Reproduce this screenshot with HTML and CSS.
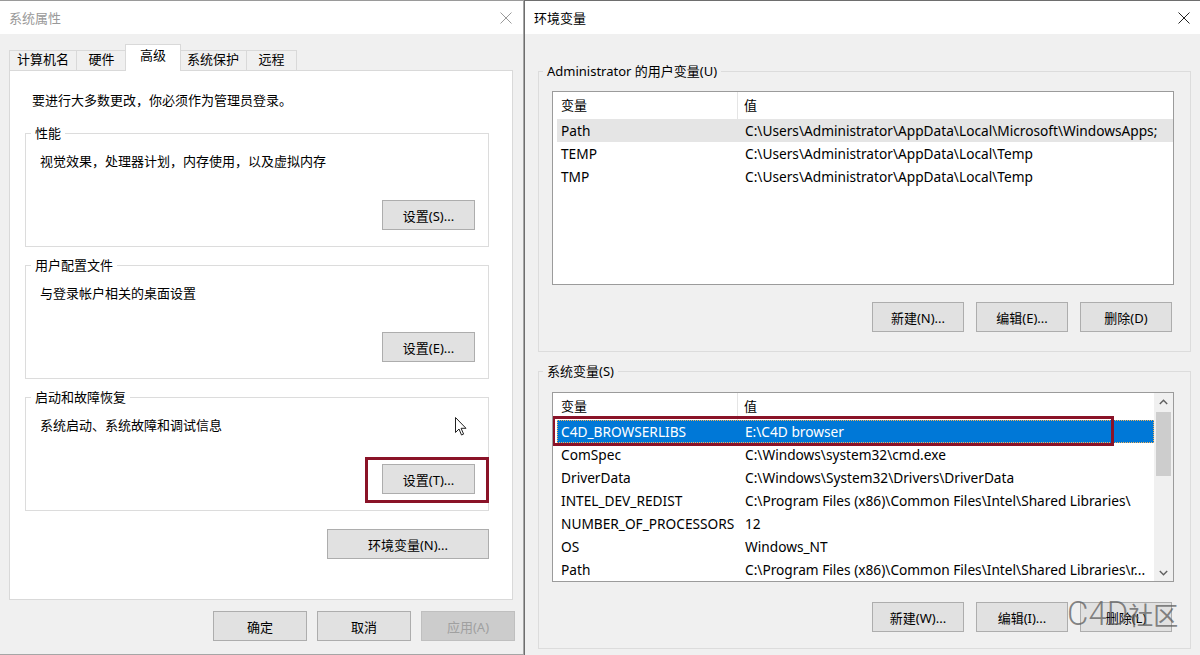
FILE: index.html
```html
<!DOCTYPE html>
<html lang="zh-CN">
<head>
    <meta charset="UTF-8">
    <title>系统属性 / 环境变量</title>
    <link rel="stylesheet" href="styles.css">
</head>
<body>
<div class="desktop">

    <!-- 系统属性 (inactive window) -->
    <section class="win win-sys">
        <header class="titlebar inactive">
            <span class="title">系统属性</span>
            <svg class="close" width="12" height="12" viewBox="0 0 12 12"><path d="M0.5 0.5 L11.5 11.5 M11.5 0.5 L0.5 11.5" stroke="#9a9a9a" stroke-width="1"/></svg>
        </header>
        <div class="win-body">
            <div class="tabs">
                <div class="tab">计算机名</div>
                <div class="tab">硬件</div>
                <div class="tab active">高级</div>
                <div class="tab">系统保护</div>
                <div class="tab">远程</div>
            </div>
            <div class="tab-panel">
                <p class="intro">要进行大多数更改，你必须作为管理员登录。</p>

                <fieldset class="grp">
                    <legend>性能</legend>
                    <p>视觉效果，处理器计划，内存使用，以及虚拟内存</p>
                    <div class="grp-actions"><button class="btn btn-set">设置(S)...</button></div>
                </fieldset>

                <fieldset class="grp">
                    <legend>用户配置文件</legend>
                    <p>与登录帐户相关的桌面设置</p>
                    <div class="grp-actions"><button class="btn btn-set">设置(E)...</button></div>
                </fieldset>

                <fieldset class="grp">
                    <legend>启动和故障恢复</legend>
                    <p>系统启动、系统故障和调试信息</p>
                    <div class="grp-actions">
                        <span class="hl-wrap"><button class="btn btn-set">设置(T)...</button></span>
                    </div>
                </fieldset>

                <div class="panel-actions"><button class="btn btn-env">环境变量(N)...</button></div>

                <!-- mouse pointer -->
                <svg class="cursor" width="14" height="21" viewBox="0 0 14 21"><path d="M1.5 1.5 L1.5 16.5 L5 13 L7.5 19 L9.6 18.1 L7.1 12.3 L12 12.3 Z" fill="#fff" stroke="#222" stroke-width="1" stroke-linejoin="round"/></svg>
            </div>
            <div class="dlg-actions">
                <button class="btn btn-dlg">确定</button>
                <button class="btn btn-dlg">取消</button>
                <button class="btn btn-dlg" disabled>应用(A)</button>
            </div>
        </div>
    </section>

    <!-- 环境变量 (active window) -->
    <section class="win win-env">
        <header class="titlebar">
            <span class="title">环境变量</span>
            <svg class="close" width="12" height="12" viewBox="0 0 12 12"><path d="M0.5 0.5 L11.5 11.5 M11.5 0.5 L0.5 11.5" stroke="#222" stroke-width="1"/></svg>
        </header>
        <div class="win-body env-body">
            <fieldset class="env-grp user-grp">
                <legend>Administrator 的用户变量(U)</legend>
                <div class="list list-user">
                    <div class="list-main">
                        <div class="list-head"><span>变量</span><span>值</span></div>
                        <div class="list-row sel-gray"><span>Path</span><span>C:\Users\Administrator\AppData\Local\Microsoft\WindowsApps;</span></div>
                        <div class="list-row"><span>TEMP</span><span>C:\Users\Administrator\AppData\Local\Temp</span></div>
                        <div class="list-row"><span>TMP</span><span>C:\Users\Administrator\AppData\Local\Temp</span></div>
                    </div>
                </div>
                <div class="env-actions">
                    <button class="btn btn-env-act">新建(N)...</button>
                    <button class="btn btn-env-act">编辑(E)...</button>
                    <button class="btn btn-env-act">删除(D)</button>
                </div>
            </fieldset>

            <fieldset class="env-grp sys-grp">
                <legend>系统变量(S)</legend>
                <div class="list list-sys">
                    <div class="list-main">
                        <div class="list-head"><span>变量</span><span>值</span></div>
                        <div class="list-row sel-blue"><span>C4D_BROWSERLIBS</span><span>E:\C4D browser</span></div>
                        <div class="list-row"><span>ComSpec</span><span>C:\Windows\system32\cmd.exe</span></div>
                        <div class="list-row"><span>DriverData</span><span>C:\Windows\System32\Drivers\DriverData</span></div>
                        <div class="list-row"><span>INTEL_DEV_REDIST</span><span>C:\Program Files (x86)\Common Files\Intel\Shared Libraries\</span></div>
                        <div class="list-row"><span>NUMBER_OF_PROCESSORS</span><span>12</span></div>
                        <div class="list-row"><span>OS</span><span>Windows_NT</span></div>
                        <div class="list-row"><span>Path</span><span>C:\Program Files (x86)\Common Files\Intel\Shared Libraries\r...</span></div>
                    </div>
                    <div class="scrollbar">
                        <div class="sb-arrow"><svg width="9" height="6" viewBox="0 0 9 6"><path d="M0.8 5 L4.5 1.2 L8.2 5" fill="none" stroke="#606060" stroke-width="1.4"/></svg></div>
                        <div class="sb-thumb"></div>
                        <div class="sb-track"></div>
                        <div class="sb-arrow"><svg width="9" height="6" viewBox="0 0 9 6"><path d="M0.8 1 L4.5 4.8 L8.2 1" fill="none" stroke="#606060" stroke-width="1.4"/></svg></div>
                    </div>
                    <div class="row-mark"></div>
                </div>
                <div class="env-actions">
                    <button class="btn btn-env-act">新建(W)...</button>
                    <button class="btn btn-env-act">编辑(I)...</button>
                    <button class="btn btn-env-act">删除(L)</button>
                </div>
            </fieldset>

            <div class="watermark"><span class="wm-latin">C4D</span>社区</div>
        </div>
    </section>

</div>
</body>
</html>
```

FILE: styles.css
```css
* {
    box-sizing: border-box;
}

body {
    margin: 0;
    font-family: "Noto Sans", "Noto Sans CJK SC", sans-serif;
    font-size: 13px;
    line-height: 18px;
    color: #000;
    background: #fff;
}

.desktop {
    display: flex;
    width: 1200px;
    height: 655px;
    overflow: hidden;
}

/* windows */
.win {
    display: flex;
    flex-direction: column;
    height: 655px;
    background: #f0f0f0;
}

.win-sys {
    width: 524px;
    flex: none;
    border-top: 1px solid #9a9a9a;
    border-right: 1px solid #a6a6a6;
    border-bottom: 1px solid #a6a6a6;
}

.win-env {
    flex: 1;
    position: relative;
    border-top: 1px solid #6e6e6e;
    border-left: 1px solid #6e6e6e;
}

.titlebar {
    height: 33px;
    flex: none;
    display: flex;
    align-items: center;
    justify-content: space-between;
    padding: 0 10px 0 9px;
    background: #fff;
}

.titlebar.inactive {
    padding-right: 11px;
}

.titlebar.inactive .title {
    color: #999;
}

.close {
    display: block;
}

.win-body {
    flex: 1;
    background: #f0f0f0;
}

/* tabs */
.tabs {
    display: flex;
    align-items: flex-end;
    height: 36px;
    padding: 10px 0 0 9px;
}

.tab {
    position: relative;
    height: 20px;
    min-width: 51px;
    padding: 0 7px;
    margin-left: -1px;
    border: 1px solid #d9d9d9;
    border-bottom: none;
    background: #f0f0f0;
    text-align: center;
    line-height: 16px;
    white-space: nowrap;
}

.tab:first-child {
    margin-left: 0;
}

.tab.active {
    z-index: 2;
    height: 27px;
    min-width: 56px;
    margin: 0 -2px -1px -2px;
    padding-top: 2px;
    background: #fff;
}

.tab.active + .tab {
    margin-left: 0;
}

.tab-panel {
    position: relative;
    height: 530px;
    margin: 0 10px 0 9px;
    padding: 20px 23px 0 15px;
    border: 1px solid #d9d9d9;
    background: #fff;
}

.intro {
    margin: 0 0 15px 7px;
}

/* group boxes */
.grp {
    margin: 0 0 9px;
    padding: 0 13px 16px 14px;
    border: 1px solid #dcdcdc;
    min-width: 0;
}

.grp legend,
.env-grp legend {
    margin-left: -9px;
    padding: 0 4px;
    line-height: 18px;
}

.grp p {
    margin: 10px 0 0;
}

.grp-actions {
    display: flex;
    justify-content: flex-end;
    margin-top: 30px;
}

.panel-actions {
    display: flex;
    justify-content: flex-end;
    margin-top: 18px;
}

/* buttons */
.btn {
    height: 30px;
    padding: 0;
    border: 1px solid #adadad;
    background: #e1e1e1;
    font-family: inherit;
    font-size: 13px;
    color: #000;
    cursor: default;
}

.btn:disabled {
    background: #cccccc;
    border-color: #bfbfbf;
    color: #a0a0a0;
}

.btn-set {
    width: 93px;
}

.btn-env {
    width: 162px;
}

.btn-dlg {
    width: 94px;
}

.btn-env-act {
    width: 92px;
}

/* red annotation around 设置(T)... */
.hl-wrap {
    position: relative;
    display: inline-flex;
}

.hl-wrap::after {
    content: "";
    position: absolute;
    top: -7px;
    right: -14px;
    bottom: -9px;
    left: -17px;
    border: 3px solid #8a1328;
}

.cursor {
    position: absolute;
    left: 444px;
    top: 345px;
}

.dlg-actions {
    display: flex;
    justify-content: flex-end;
    gap: 10px;
    margin-top: 11px;
    padding-right: 8px;
}

/* 环境变量 */
.env-body {
    padding: 28px 9px 0 13px;
}

.env-grp {
    margin: 0 0 10px;
    padding: 0 16px 19px 13px;
    border: 1px solid #dcdcdc;
    min-width: 0;
}

.env-grp legend {
    margin-left: -9px;
}

.list {
    position: relative;
    display: flex;
    border: 1px solid #9b9b9b;
    background: #fff;
    overflow: hidden;
}

.list-user {
    height: 194px;
    margin-top: 11px;
}

.list-sys {
    height: 190px;
    margin-top: 12px;
}

.list-main {
    flex: 1;
    min-width: 0;
    overflow: hidden;
}

.list-head {
    display: grid;
    grid-template-columns: 185px 1fr;
    height: 27px;
    line-height: 27px;
}

.list-head span {
    padding-left: 8px;
}

.list-head span:first-child {
    border-right: 1px solid #e5e5e5;
}

.list-head span:last-child {
    padding-left: 6px;
}

.list-row {
    display: grid;
    grid-template-columns: 181px 1fr;
    height: 23px;
    margin-left: 4px;
    font-size: 13.7px;
    line-height: 23px;
    white-space: nowrap;
}

.list-row span {
    overflow: hidden;
    padding-left: 4px;
}

.list-row span:last-child {
    padding-left: 7px;
}

.sel-gray {
    background: #e5e5e5;
}

.sel-blue {
    background: #0078d7;
    color: #fff;
    outline: 1px dotted #f3b35a;
    outline-offset: -1px;
}

.scrollbar {
    display: flex;
    flex-direction: column;
    width: 19px;
    flex: none;
    background: #f0f0f0;
}

.sb-arrow {
    height: 17px;
    display: flex;
    align-items: center;
    justify-content: center;
}

.sb-thumb {
    height: 64px;
    margin: 2px 2px 0;
    background: #cdcdcd;
}

.sb-track {
    flex: 1;
}

.row-mark {
    position: absolute;
    left: -1px;
    top: 23px;
    width: 562px;
    height: 30px;
    border: 3px solid #8a1328;
}

.env-actions {
    display: flex;
    justify-content: flex-end;
    gap: 12px;
    padding-right: 2px;
}

.user-grp .env-actions {
    margin-top: 17px;
}

.sys-grp .env-actions {
    margin-top: 20px;
}

.sys-grp {
    padding-bottom: 16px;
}

.watermark {
    position: absolute;
    left: 542px;
    top: 594px;
    font-size: 25px;
    line-height: 38px;
    color: rgba(95, 95, 95, 0.75);
    white-space: nowrap;
}

.wm-latin {
    font-family: Roboto, "Noto Sans", sans-serif;
    font-weight: 300;
    font-size: 33px;
}
```
